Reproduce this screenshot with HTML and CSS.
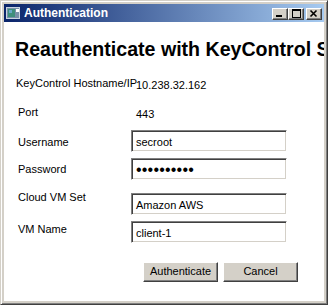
FILE: index.html
```html
<!DOCTYPE html>
<html lang="en">
<head>
<meta charset="utf-8">
<title>Authentication</title>
<link rel="stylesheet" href="styles.css">
</head>
<body>
<div class="window">
  <div class="titlebar">
    <svg class="app-icon" viewBox="0 0 14 12" width="14" height="12">
      <rect x="0.5" y="0.5" width="13" height="11" fill="#7890a8" stroke="#c8d4e0"/>
      <rect x="2" y="2" width="7" height="8" fill="#3f8f7c"/>
      <rect x="3" y="3" width="3" height="3" fill="#6aa8c8"/>
      <rect x="10" y="2" width="3" height="3" fill="#ffffff"/>
    </svg>
    <span class="title">Authentication</span>
    <div class="controls">
      <button class="ctl" type="button" aria-label="Minimize">
        <svg viewBox="0 0 14 10" width="14" height="10"><rect x="3" y="6" width="6" height="2" fill="#000"/></svg>
      </button>
      <button class="ctl" type="button" aria-label="Maximize">
        <svg viewBox="0 0 14 10" width="14" height="10"><path d="M3 0h9v9h-9z M4 2v6h7v-6z" fill="#000" fill-rule="evenodd"/></svg>
      </button>
      <button class="ctl ctl-close" type="button" aria-label="Close">
        <svg viewBox="0 0 14 10" width="14" height="10"><path d="M3.5 1.5l6 6M9.5 1.5l-6 6" stroke="#000" stroke-width="1.6" fill="none"/></svg>
      </button>
    </div>
  </div>
  <div class="client">
    <h1 class="heading">Reauthenticate with KeyControl Server</h1>
    <div class="form">
      <div class="label label-wide">KeyControl Hostname/IP</div>
      <div class="value offset-2">10.238.32.162</div>

      <div class="label">Port</div>
      <div class="value offset-2">443</div>

      <div class="label offset-6">Username</div>
      <div class="field">secroot</div>

      <div class="label offset-5">Password</div>
      <div class="field"><span class="secret">••••••••••</span></div>

      <div class="label">Cloud VM Set</div>
      <div class="field offset-2">Amazon AWS</div>

      <div class="label offset-2">VM Name</div>
      <div class="field">client-1</div>
    </div>
    <div class="actions">
      <button class="btn" type="button">Authenticate</button>
      <button class="btn" type="button">Cancel</button>
    </div>
  </div>
</div>
</body>
</html>
```

FILE: styles.css
```css
* {
  box-sizing: border-box;
}

html,
body {
  margin: 0;
  background: #ffffff;
}

body {
  font-family: "Liberation Sans", Arial, sans-serif;
  font-size: 11px;
  color: #000000;
}

.window {
  width: 328px;
  height: 305px;
  border: 1px solid;
  border-color: #d4d0c8 #404040 #404040 #d4d0c8;
  box-shadow: inset 1px 1px #ffffff, inset -1px -1px #808080;
  padding: 3px;
  background: #d4d0c8;
  display: flex;
  flex-direction: column;
}

.titlebar {
  height: 18px;
  flex: none;
  display: flex;
  align-items: center;
  padding: 0 2px;
  background: linear-gradient(to right, #0a246a, #a6caf0);
  color: #ffffff;
}

.app-icon {
  display: block;
  flex: none;
}

.title {
  margin-left: 4px;
  font-size: 12px;
  font-weight: bold;
  line-height: 18px;
}

.controls {
  margin-left: auto;
  align-self: flex-start;
  margin-top: 4px;
  display: flex;
}

.ctl {
  width: 16px;
  height: 12px;
  padding: 0;
  background: #d4d0c8;
  border: 1px solid;
  border-color: #ffffff #404040 #404040 #ffffff;
  box-shadow: inset -1px -1px #808080;
  display: block;
}

.ctl svg {
  display: block;
}

.ctl-close {
  margin-left: 2px;
}

.client {
  flex: 1;
  background: #ffffff;
  padding: 16px 0 0 11px;
  overflow: hidden;
}

.heading {
  margin: 0;
  font-size: 19.6px;
  line-height: 23px;
  font-weight: bold;
  white-space: nowrap;
}

.form {
  margin: 16px 0 0 3px;
  display: grid;
  grid-template-columns: 113px 156px;
  grid-template-rows: 29px 24px 28px 33px 30px 22px;
}

.label,
.value {
  align-self: start;
  line-height: 13px;
  white-space: nowrap;
}

.label-wide {
  margin-left: -2px;
}

.value {
  padding-left: 5px;
}

.offset-2 {
  margin-top: 2px;
}

.offset-5 {
  margin-top: 5px;
}

.offset-6 {
  margin-top: 6px;
}

.field {
  align-self: start;
  width: 156px;
  height: 22px;
  padding: 2px 4px 0;
  line-height: 18px;
  white-space: nowrap;
  overflow: hidden;
  border: 1px solid;
  border-color: #808080 #ffffff #ffffff #808080;
  box-shadow: inset 1px 1px #404040, inset -1px -1px #d4d0c8;
}

.secret {
  font-size: 16px;
  letter-spacing: 0.2px;
  line-height: 18px;
}

.actions {
  display: flex;
  gap: 5px;
  margin: 19px 0 0 128px;
}

.btn {
  width: 75px;
  height: 20px;
  padding: 0 0 1px;
  font: inherit;
  font-size: 11px;
  line-height: 17px;
  color: #000000;
  background: #d4d0c8;
  border: 1px solid;
  border-color: #ffffff #404040 #404040 #ffffff;
  box-shadow: inset -1px -1px #808080;
}
```
